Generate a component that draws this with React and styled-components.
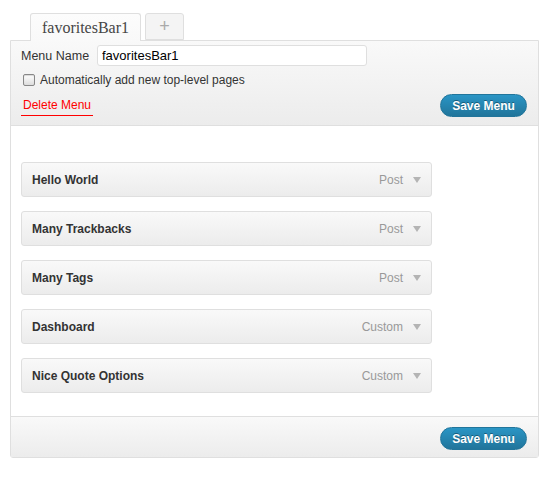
import React from 'react'
import styled, { createGlobalStyle } from 'styled-components'

const Global = createGlobalStyle`
  body {
    margin: 0;
    background: #fff;
    font-family: "Liberation Sans", Arial, sans-serif;
  }
`;

const Page = styled.div`
  padding: 13px 0 0 10px;
  width: 529px;
`;

const TabBar = styled.div`
  display: flex;
  gap: 4px;
  padding-left: 20px;
  margin-bottom: -1px;
  position: relative;
  z-index: 1;
`;

const Tab = styled.div`
  box-sizing: border-box;
  display: flex;
  align-items: center;
  justify-content: center;
  border: 1px solid #dfdfdf;
  border-bottom: ${p => (p.$active ? 'none' : '1px solid #dfdfdf')};
  border-radius: 3px 3px 0 0;
  background: ${p => (p.$active ? 'linear-gradient(#fcfcfc, #f9f9f9)' : '#f4f4f4')};
  width: ${p => p.$width}px;
  font-family: ${p => (p.$active ? '"Liberation Serif", "DejaVu Serif", serif' : '"Liberation Sans", Arial, sans-serif')};
  font-size: ${p => (p.$active ? '16px' : '18px')};
  color: ${p => (p.$active ? '#464646' : '#aaa')};
  height: ${p => (p.$active ? '28px' : '27px')};
`;

const Box = styled.div`
  border: 1px solid #dfdfdf;
  border-radius: 0 0 3px 3px;
`;

const Header = styled.div`
  background: linear-gradient(#f9f9f9, #ececec);
  border-bottom: 1px solid #dfdfdf;
  padding: 4px 11px 8px 10px;
`;

const NameRow = styled.div`
  display: flex;
  align-items: center;
  gap: 11px;
`;

const Label = styled.label`
  width: 65px;
  font-size: 12.5px;
  color: #333;
  white-space: nowrap;
`;

const NameInput = styled.input`
  box-sizing: border-box;
  width: 270px;
  height: 21px;
  border: 1px solid #dfdfdf;
  border-radius: 3px;
  padding: 0 4px;
  font: 13px "Liberation Sans", Arial, sans-serif;
  color: #000;
  background: #fff;
`;

const CheckRow = styled.label`
  display: flex;
  align-items: center;
  gap: 5px;
  margin-top: 7px;
  font-size: 12px;
  color: #333;
`;

const Check = styled.span`
  box-sizing: border-box;
  width: 12px;
  height: 12px;
  margin-left: 2px;
  border: 1px solid #888;
  border-radius: 2px;
  background: linear-gradient(#fff, #ddd);
  box-shadow: inset 0 1px 1px rgba(0,0,0,0.15);
`;

const ActionRow = styled.div`
  display: flex;
  justify-content: space-between;
  align-items: flex-start;
  margin-top: 7px;
`;

const DeleteLink = styled.a`
  font-size: 12px;
  line-height: 14px;
  color: #f00;
  text-decoration: none;
  padding: 0 2px 3px;
  margin-top: 4px;
  border-bottom: 1px solid #f00;
`;

const SaveButton = styled.button`
  box-sizing: border-box;
  width: 87px;
  height: 23px;
  border: 1px solid #21759b;
  border-radius: 12px;
  background: linear-gradient(#2a95c5, #21759b);
  color: #fff;
  font: bold 12px "Liberation Sans", Arial, sans-serif;
  text-shadow: 0 -1px 0 rgba(0,0,0,0.35);
  padding: 0;
`;

const Body = styled.div`
  background: #fff;
  padding: 36px 0 23px 10px;
  display: flex;
  flex-direction: column;
  gap: 14px;
`;

const Item = styled.div`
  box-sizing: border-box;
  width: 411px;
  height: 35px;
  display: flex;
  align-items: center;
  padding: 0 10px;
  border: 1px solid #dfdfdf;
  border-radius: 3px;
  background: linear-gradient(#f9f9f9, #ececec);
`;

const ItemTitle = styled.span`
  flex: 1;
  font-size: 12px;
  font-weight: bold;
  color: #333;
`;

const ItemType = styled.span`
  font-size: 12px;
  color: #999;
`;

const Arrow = styled.span`
  width: 0;
  height: 0;
  margin-left: 10px;
  border-left: 4px solid transparent;
  border-right: 4px solid transparent;
  border-top: 6px solid #b4b4b4;
`;

const Footer = styled.div`
  background: linear-gradient(#f9f9f9, #ececec);
  border-top: 1px solid #dfdfdf;
  padding: 10px 11px 7px;
  display: flex;
  justify-content: flex-end;
`;

const items = [
  { title: 'Hello World', type: 'Post' },
  { title: 'Many Trackbacks', type: 'Post' },
  { title: 'Many Tags', type: 'Post' },
  { title: 'Dashboard', type: 'Custom' },
  { title: 'Nice Quote Options', type: 'Custom' },
];

export default function App() {
  return (
    <>
      <Global />
      <Page>
        <TabBar>
          <Tab $active $width={111}>favoritesBar1</Tab>
          <Tab $width={39}>+</Tab>
        </TabBar>
        <Box>
          <Header>
            <NameRow>
              <Label>Menu Name</Label>
              <NameInput defaultValue="favoritesBar1" />
            </NameRow>
            <CheckRow>
              <Check />
              Automatically add new top-level pages
            </CheckRow>
            <ActionRow>
              <DeleteLink href="#">Delete Menu</DeleteLink>
              <SaveButton>Save Menu</SaveButton>
            </ActionRow>
          </Header>
          <Body>
            {items.map(it => (
              <Item key={it.title}>
                <ItemTitle>{it.title}</ItemTitle>
                <ItemType>{it.type}</ItemType>
                <Arrow />
              </Item>
            ))}
          </Body>
          <Footer>
            <SaveButton>Save Menu</SaveButton>
          </Footer>
        </Box>
      </Page>
    </>
  )
}
